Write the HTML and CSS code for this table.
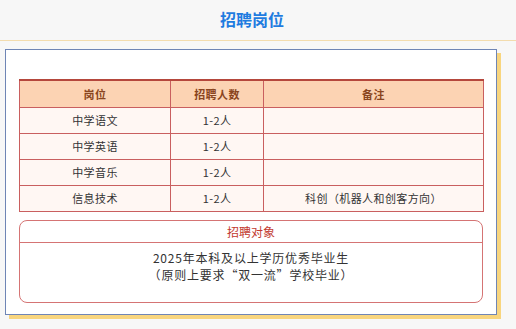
FILE: index.html
```html
<!DOCTYPE html>
<html lang="zh-CN">
<head>
<meta charset="utf-8">
<link rel="stylesheet" href="styles.css">
</head>
<body>
<header class="top">
  <h1 class="title">招聘岗位</h1>
</header>
<main class="card">
  <table class="jobs">
    <colgroup>
      <col class="c1"><col class="c2"><col class="c3">
    </colgroup>
    <thead>
      <tr><th>岗位</th><th>招聘人数</th><th>备注</th></tr>
    </thead>
    <tbody>
      <tr><td>中学语文</td><td>1-2人</td><td></td></tr>
      <tr><td>中学英语</td><td>1-2人</td><td></td></tr>
      <tr><td>中学音乐</td><td>1-2人</td><td></td></tr>
      <tr><td>信息技术</td><td>1-2人</td><td>科创（机器人和创客方向）</td></tr>
    </tbody>
  </table>
  <section class="target">
    <div class="target-head">招聘对象</div>
    <div class="target-body">
      <p>2025年本科及以上学历优秀毕业生</p>
      <p>（原则上要求“双一流”学校毕业）</p>
    </div>
  </section>
</main>
</body>
</html>
```

FILE: styles.css
```css
* { box-sizing: border-box; }
html, body { margin: 0; padding: 0; }
body {
  background: #f7f7f7;
  font-family: "Noto Sans CJK SC", "Noto Sans", sans-serif;
  width: 516px;
  height: 329px;
  overflow: hidden;
}
.top {
  height: 41px;
  border-bottom: 1px solid #f3dcae;
  display: flex;
  align-items: center;
  justify-content: center;
  padding-right: 12px;
}
.title {
  margin: 0;
  font-size: 16px;
  font-weight: 700;
  color: #1f7ce0;
  line-height: 20px;
  padding-bottom: 3px;
}
.card {
  margin: 8px 0 0 5px;
  width: 492px;
  height: 266px;
  background: #fff;
  border: 1px solid #6f85b5;
  box-shadow: 4px 4px 0 #f8d57e;
  padding: 29px 13px 0 13px;
}
.jobs {
  width: 464px;
  border-collapse: collapse;
  table-layout: fixed;
  font-size: 11px;
  color: #333;
}
.c1 { width: 151px; }
.c2 { width: 93px; }
.c3 { width: 220px; }
.jobs th, .jobs td {
  border: 1px solid #c95f5f;
  text-align: center;
  padding: 0;
  letter-spacing: 0.4px;
}
.jobs th {
  height: 27px;
  background: #fcd3b3;
  color: #8a4520;
  font-weight: 700;
  border-top: 2px solid #b5473c;
}
.jobs td {
  height: 26px;
  background: #fff7f3;
}
.target {
  margin-top: 8px;
  width: 464px;
  height: 83px;
  border: 1px solid #d57474;
  border-radius: 8px;
  overflow: hidden;
}
.target-head {
  height: 22px;
  border-bottom: 1px solid #d57474;
  color: #c23a30;
  font-size: 12px;
  text-align: center;
  line-height: 21px;
}
.target-body {
  padding-top: 6px;
  text-align: center;
  font-size: 12px;
  color: #333;
  letter-spacing: 0.8px;
}
.target-body p {
  margin: 0;
  line-height: 17px;
}
```
